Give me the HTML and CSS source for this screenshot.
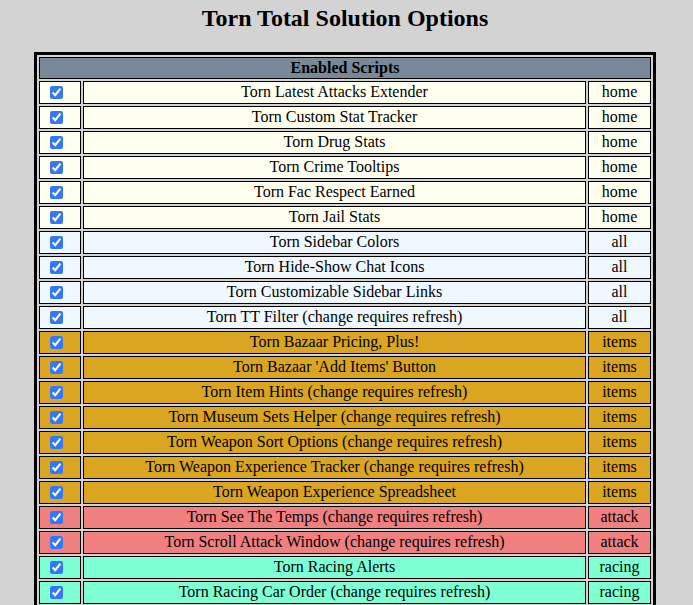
FILE: index.html
```html
<!DOCTYPE html>
<html>
<head>
<meta charset="utf-8">
<title>Torn Total Solution Options</title>
<link rel="stylesheet" href="styles.css">
</head>
<body>
<div class="page">
  <h2 class="title">Torn Total Solution Options</h2>
  <table class="scripts">
    <tr><th class="head" colspan="3">Enabled Scripts</th></tr>
    <tr class="home"><td class="chk"><input type="checkbox" checked></td><td class="name">Torn Latest Attacks Extender</td><td class="cat">home</td></tr>
    <tr class="home"><td class="chk"><input type="checkbox" checked></td><td class="name">Torn Custom Stat Tracker</td><td class="cat">home</td></tr>
    <tr class="home"><td class="chk"><input type="checkbox" checked></td><td class="name">Torn Drug Stats</td><td class="cat">home</td></tr>
    <tr class="home"><td class="chk"><input type="checkbox" checked></td><td class="name">Torn Crime Tooltips</td><td class="cat">home</td></tr>
    <tr class="home"><td class="chk"><input type="checkbox" checked></td><td class="name">Torn Fac Respect Earned</td><td class="cat">home</td></tr>
    <tr class="home"><td class="chk"><input type="checkbox" checked></td><td class="name">Torn Jail Stats</td><td class="cat">home</td></tr>
    <tr class="all"><td class="chk"><input type="checkbox" checked></td><td class="name">Torn Sidebar Colors</td><td class="cat">all</td></tr>
    <tr class="all"><td class="chk"><input type="checkbox" checked></td><td class="name">Torn Hide-Show Chat Icons</td><td class="cat">all</td></tr>
    <tr class="all"><td class="chk"><input type="checkbox" checked></td><td class="name">Torn Customizable Sidebar Links</td><td class="cat">all</td></tr>
    <tr class="all"><td class="chk"><input type="checkbox" checked></td><td class="name">Torn TT Filter (change requires refresh)</td><td class="cat">all</td></tr>
    <tr class="items"><td class="chk"><input type="checkbox" checked></td><td class="name">Torn Bazaar Pricing, Plus!</td><td class="cat">items</td></tr>
    <tr class="items"><td class="chk"><input type="checkbox" checked></td><td class="name">Torn Bazaar 'Add Items' Button</td><td class="cat">items</td></tr>
    <tr class="items"><td class="chk"><input type="checkbox" checked></td><td class="name">Torn Item Hints (change requires refresh)</td><td class="cat">items</td></tr>
    <tr class="items"><td class="chk"><input type="checkbox" checked></td><td class="name">Torn Museum Sets Helper (change requires refresh)</td><td class="cat">items</td></tr>
    <tr class="items"><td class="chk"><input type="checkbox" checked></td><td class="name">Torn Weapon Sort Options (change requires refresh)</td><td class="cat">items</td></tr>
    <tr class="items"><td class="chk"><input type="checkbox" checked></td><td class="name">Torn Weapon Experience Tracker (change requires refresh)</td><td class="cat">items</td></tr>
    <tr class="items"><td class="chk"><input type="checkbox" checked></td><td class="name">Torn Weapon Experience Spreadsheet</td><td class="cat">items</td></tr>
    <tr class="attack"><td class="chk"><input type="checkbox" checked></td><td class="name">Torn See The Temps (change requires refresh)</td><td class="cat">attack</td></tr>
    <tr class="attack"><td class="chk"><input type="checkbox" checked></td><td class="name">Torn Scroll Attack Window (change requires refresh)</td><td class="cat">attack</td></tr>
    <tr class="racing"><td class="chk"><input type="checkbox" checked></td><td class="name">Torn Racing Alerts</td><td class="cat">racing</td></tr>
    <tr class="racing"><td class="chk"><input type="checkbox" checked></td><td class="name">Torn Racing Car Order (change requires refresh)</td><td class="cat">racing</td></tr>
  </table>
</div>
</body>
</html>
```
FILE: styles.css
```css
html, body {
  margin: 0;
  background: #d3d3d3;
}
body {
  font-family: "Liberation Serif", "Times New Roman", serif;
  font-size: 16px;
  color: #000;
}
.page {
  width: 622px;
  padding: 4px 0 0 34px;
}
.title {
  margin: 0 0 20px 0;
  font-size: 24px;
  line-height: 28px;
  font-weight: bold;
  text-align: center;
}
.scripts {
  width: 622px;
  border: 3px solid #000;
  border-spacing: 2px;
  border-collapse: separate;
}
.scripts th,
.scripts td {
  border: 1px solid #000;
  padding: 1px;
  line-height: 18px;
  text-align: center;
  vertical-align: middle;
}
.head {
  background: #778899;
  font-weight: bold;
  height: 18px;
}
.scripts td.chk {
  width: 29px;
  text-align: left;
  padding: 1px 1px 1px 10px;
}
.chk input {
  display: block;
  width: 13px;
  height: 13px;
  margin: 3px 0;
  accent-color: #3478f6;
}
.scripts td.name {
  width: 499px;
  padding: 0 1px 2px 1px;
}
.scripts td.cat {
  width: 59px;
  padding: 0 1px 2px 1px;
}
.home td { background: #fffff0; }
.all td { background: #f0f8ff; }
.items td { background: #daa520; }
.attack td { background: #f08080; }
.racing td { background: #7fffd4; }
```
